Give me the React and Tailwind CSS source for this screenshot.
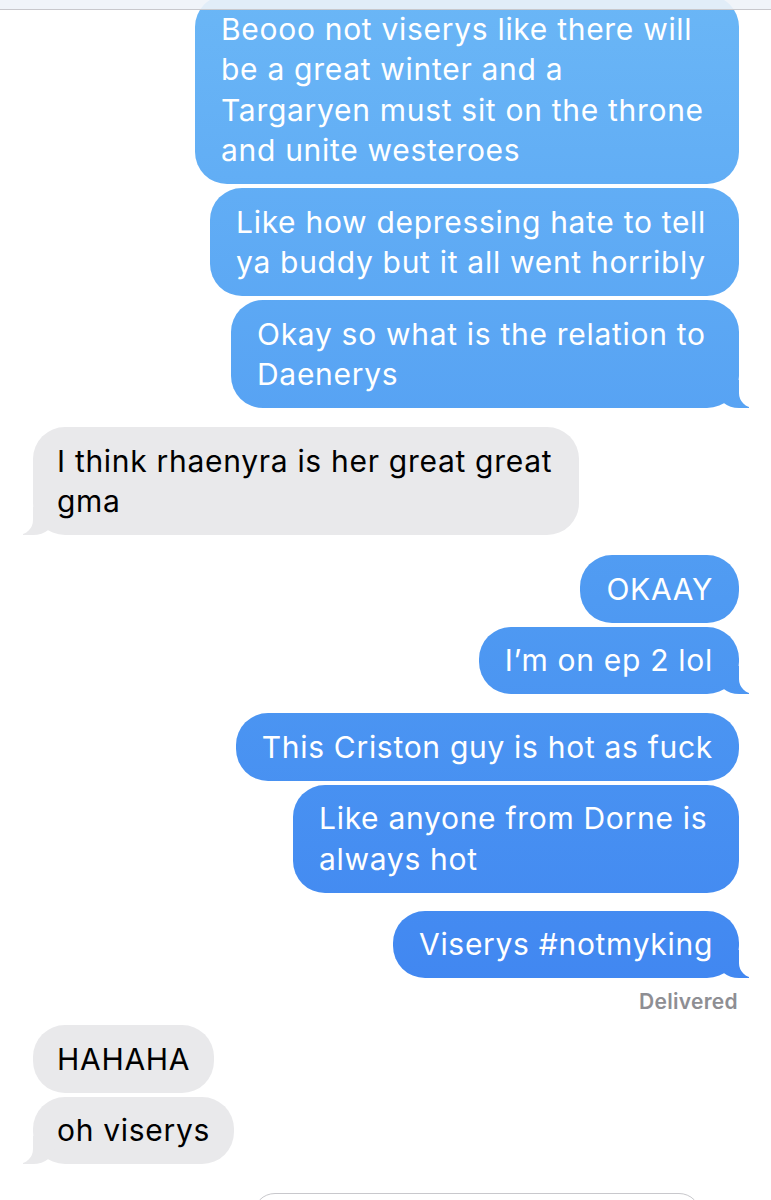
import React from 'react';

const sent = [
    { lines: ['Beooo not viserys like there will', 'be a great winter and a', 'Targaryen must sit on the throne', 'and unite westeroes'], w: 'w-[544px]' },
    { lines: ['Like how depressing hate to tell', 'ya buddy but it all went horribly'], w: 'w-[529px]' },
    { lines: ['Okay so what is the relation to', 'Daenerys'], w: 'w-[508px]', tail: true },
];

const sent2 = [
    { lines: ['OKAAY'] },
    { lines: ['I’m on ep 2 lol'], tail: true },
];

const sent3 = [
    { lines: ['This Criston guy is hot as fuck'] },
    { lines: ['Like anyone from Dorne is', 'always hot'], w: 'w-[446px]' },
];

const Lines = ({ lines }) => (
    <span className="relative z-10 flex flex-col whitespace-nowrap">
        {lines.map((l, i) => <span key={i}>{l}</span>)}
    </span>
);

const Sent = ({ lines, w, tail }) => (
    <div className={`relative self-end ${w || ''} rounded-[32px] px-[26px] py-[13.5px] text-white bg-fixed bg-linear-to-b from-[#6ab6f6] via-[#4f9af2] to-[#3a7cf0] ${tail ? "before:content-[''] before:absolute before:bottom-0 before:right-[-10px] before:w-[32px] before:h-[28px] before:rounded-bl-[22px_18px] before:bg-fixed before:bg-linear-to-b before:from-[#6ab6f6] before:via-[#4f9af2] before:to-[#3a7cf0] after:content-[''] after:absolute after:bottom-0 after:right-[-40px] after:w-[40px] after:h-[30px] after:bg-white after:rounded-bl-[15px]" : ''}`}>
        <Lines lines={lines} />
    </div>
);

const Received = ({ lines, w, tail }) => (
    <div className={`relative self-start ${w || ''} rounded-[32px] px-[24px] py-[13.5px] text-black bg-[#e9e9eb] ${tail ? "before:content-[''] before:absolute before:bottom-0 before:left-[-10px] before:w-[32px] before:h-[28px] before:rounded-br-[22px_18px] before:bg-[#e9e9eb] after:content-[''] after:absolute after:bottom-0 after:left-[-40px] after:w-[40px] after:h-[30px] after:bg-white after:rounded-br-[15px]" : ''}`}>
        <Lines lines={lines} />
    </div>
);

export default function App() {
    return (
        <div className="relative h-[1200px] w-[771px] overflow-hidden bg-white font-['Inter','Noto_Sans',sans-serif] text-[30px] leading-[40.5px] tracking-[0.7px]">
            <div className="absolute top-0 left-0 right-0 z-20 h-[10px] bg-[#eef3f8]/90 border-b border-[#c8c8cc]"></div>

            <div className="flex flex-col pl-[33px] pr-[32px] -mt-[5px]">
                <div className="flex flex-col gap-[4px]">
                    {sent.map((m, i) => <Sent key={i} {...m} />)}
                </div>

                <div className="mt-[19px]">
                    <Received lines={['I think rhaenyra is her great great', 'gma']} w="w-[546px]" tail />
                </div>

                <div className="mt-[20px] flex flex-col gap-[4px]">
                    {sent2.map((m, i) => <Sent key={i} {...m} />)}
                </div>

                <div className="mt-[19px] flex flex-col gap-[4px]">
                    {sent3.map((m, i) => <Sent key={i} {...m} />)}
                </div>

                <div className="mt-[18px] flex flex-col">
                    <Sent lines={['Viserys #notmyking']} tail />
                </div>

                <div className="mt-[12px] self-end pr-[1px] text-[21px] leading-[24px] font-semibold text-[#8e8e93] tracking-[0.3px]">Delivered</div>

                <div className="mt-[11px] flex flex-col gap-[4px]">
                    <Received lines={['HAHAHA']} />
                    <Received lines={['oh viserys']} tail />
                </div>
            </div>

            <div className="absolute left-[253px] top-[1193px] w-[448px] h-[60px] rounded-[22px] border-[1.5px] border-[#c8c8cc]"></div>
        </div>
    );
}
